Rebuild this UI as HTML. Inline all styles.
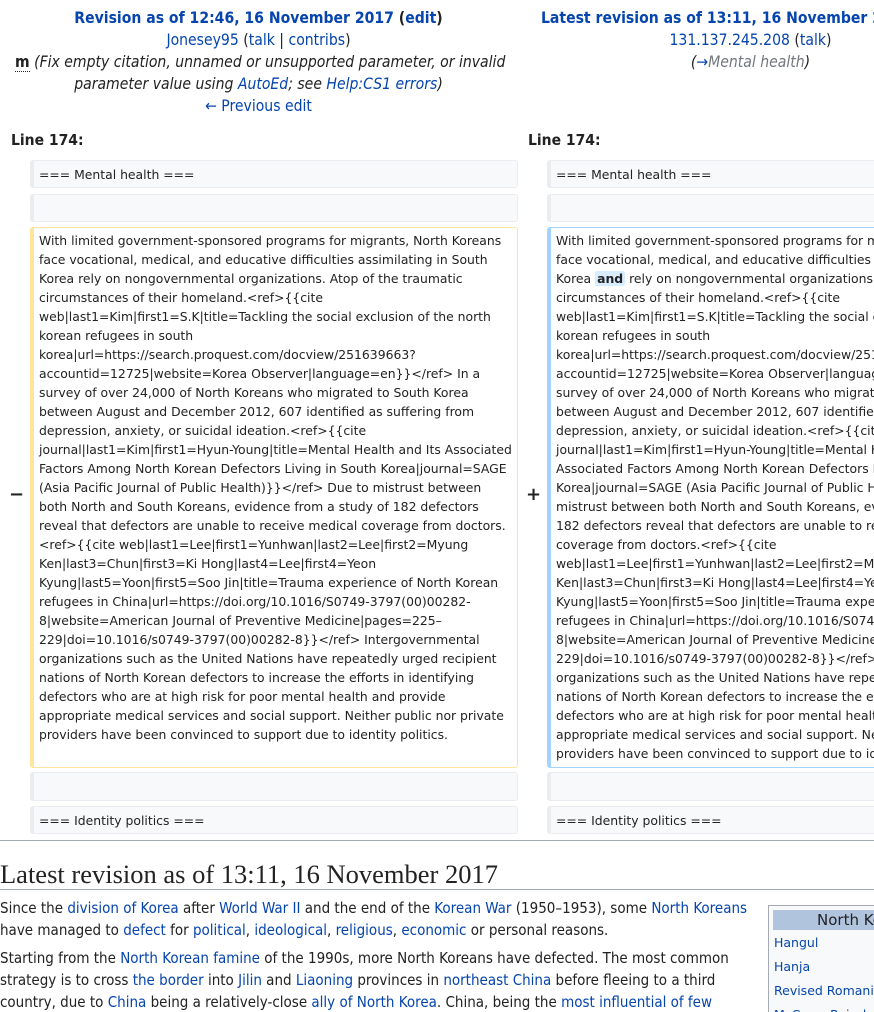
<!DOCTYPE html>
<html><head><meta charset="utf-8"><style>
*{margin:0;padding:0;box-sizing:border-box}
html,body{width:874px;height:1012px;overflow:hidden;background:#fff}
body{font-family:"DejaVu Sans Condensed","Liberation Sans Narrow","Liberation Sans",sans-serif;color:#222;font-size:14px}
#w{position:relative;width:874px;height:1012px;overflow:hidden}
a{color:#0645ad;text-decoration:none}
.abs{position:absolute;white-space:nowrap}
.hdr{position:absolute;text-align:center;width:487px;line-height:22px;font-size:15.6px;white-space:nowrap}
.box{position:absolute;background:#f8f9fa;border:1px solid #eaecf0;border-left-width:4px;border-radius:3px;font-family:"DejaVu Sans",sans-serif;font-size:12.4px;line-height:19px;padding:4px 0 0 5px;white-space:nowrap;overflow:hidden}
.main{background:#fff;padding-top:3px}
.del{border-color:#ffe49c}
.ins{border-color:#a3d3ff}
.mk{position:absolute;font-family:"DejaVu Sans",sans-serif;font-weight:bold;font-size:18px}
b.h{background:#d8ecff;border-radius:2px;padding:0 2px}
.p{position:absolute;left:0;line-height:22px;font-size:15px;white-space:nowrap}
</style></head><body><div id="w">
<div class="hdr" style="left:15px;top:7px">
<div><b><a>Revision as of 12:46, 16 November 2017</a> (<a>edit</a>)</b></div>
<div><a>Jonesey95</a> (<a>talk</a> | <a>contribs</a>)</div>
<div><b style="border-bottom:1px dotted #222">m</b> <i>(Fix empty citation, unnamed or unsupported parameter, or invalid</i></div>
<div><i>parameter value using <a>AutoEd</a>; see <a>Help:CS1 errors</a>)</i></div>
<div><a>← Previous edit</a></div>
</div>
<div class="hdr" style="left:507px;top:7px;width:487px">
<div><b><a>Latest revision as of 13:11, 16 November 2017</a> (<a>edit</a>)</b></div>
<div><a>131.137.245.208</a> (<a>talk</a>)</div>
<div><i>(<a>→</a><a style="color:#72777d">Mental health</a>)</i></div>
</div>
<div class="abs" style="left:11px;top:131px;font-weight:bold;font-size:15.5px">Line 174:</div>
<div class="abs" style="left:528px;top:131px;font-weight:bold;font-size:15.5px">Line 174:</div>

<div class="box" style="left:30px;top:160px;width:488px;height:28px">=== Mental health ===</div>
<div class="box" style="left:30px;top:194px;width:488px;height:28px"></div>
<div class="box main del" style="left:30px;top:227px;width:488px;height:541px">With limited government-sponsored programs for migrants, North Koreans<br>face vocational, medical, and educative difficulties assimilating in South<br>Korea rely on nongovernmental organizations. Atop of the traumatic<br>circumstances of their homeland.&lt;ref&gt;{{cite<br>web|last1=Kim|first1=S.K|title=Tackling the social exclusion of the north<br>korean refugees in south<br>korea|url=https://search.proquest.com/docview/251639663?<br>accountid=12725|website=Korea Observer|language=en}}&lt;/ref&gt; In a<br>survey of over 24,000 of North Koreans who migrated to South Korea<br>between August and December 2012, 607 identified as suffering from<br>depression, anxiety, or suicidal ideation.&lt;ref&gt;{{cite<br>journal|last1=Kim|first1=Hyun-Young|title=Mental Health and Its Associated<br>Factors Among North Korean Defectors Living in South Korea|journal=SAGE<br>(Asia Pacific Journal of Public Health)}}&lt;/ref&gt; Due to mistrust between<br>both North and South Koreans, evidence from a study of 182 defectors<br>reveal that defectors are unable to receive medical coverage from doctors.<br>&lt;ref&gt;{{cite web|last1=Lee|first1=Yunhwan|last2=Lee|first2=Myung<br>Ken|last3=Chun|first3=Ki Hong|last4=Lee|first4=Yeon<br>Kyung|last5=Yoon|first5=Soo Jin|title=Trauma experience of North Korean<br>refugees in China|url=https://doi.org/10.1016/S0749-3797(00)00282-<br>8|website=American Journal of Preventive Medicine|pages=225–<br>229|doi=10.1016/s0749-3797(00)00282-8}}&lt;/ref&gt; Intergovernmental<br>organizations such as the United Nations have repeatedly urged recipient<br>nations of North Korean defectors to increase the efforts in identifying<br>defectors who are at high risk for poor mental health and provide<br>appropriate medical services and social support. Neither public nor private<br>providers have been convinced to support due to identity politics.</div>
<div class="box" style="left:30px;top:772px;width:488px;height:29px"></div>
<div class="box" style="left:30px;top:806px;width:488px;height:28px">=== Identity politics ===</div>
<div class="mk" style="left:9px;top:484px">−</div>

<div class="box" style="left:547px;top:160px;width:488px;height:28px">=== Mental health ===</div>
<div class="box" style="left:547px;top:194px;width:488px;height:28px"></div>
<div class="box main ins" style="left:547px;top:227px;width:488px;height:541px">With limited government-sponsored programs for migrants, North Koreans<br>face vocational, medical, and educative difficulties assimilating in South<br>Korea <b class="h">and</b> rely on nongovernmental organizations. Atop of the traumatic<br>circumstances of their homeland.&lt;ref&gt;{{cite<br>web|last1=Kim|first1=S.K|title=Tackling the social exclusion of the north<br>korean refugees in south<br>korea|url=https://search.proquest.com/docview/251639663?<br>accountid=12725|website=Korea Observer|language=en}}&lt;/ref&gt; In a<br>survey of over 24,000 of North Koreans who migrated to South Korea<br>between August and December 2012, 607 identified as suffering from<br>depression, anxiety, or suicidal ideation.&lt;ref&gt;{{cite<br>journal|last1=Kim|first1=Hyun-Young|title=Mental Health and Its<br>Associated Factors Among North Korean Defectors Living in South<br>Korea|journal=SAGE (Asia Pacific Journal of Public Health)}}&lt;/ref&gt; Due to<br>mistrust between both North and South Koreans, evidence from a study of<br>182 defectors reveal that defectors are unable to receive medical<br>coverage from doctors.&lt;ref&gt;{{cite<br>web|last1=Lee|first1=Yunhwan|last2=Lee|first2=Myung<br>Ken|last3=Chun|first3=Ki Hong|last4=Lee|first4=Yeon<br>Kyung|last5=Yoon|first5=Soo Jin|title=Trauma experience of North Korean<br>refugees in China|url=https://doi.org/10.1016/S0749-3797(00)00282-<br>8|website=American Journal of Preventive Medicine|pages=225–<br>229|doi=10.1016/s0749-3797(00)00282-8}}&lt;/ref&gt; Intergovernmental<br>organizations such as the United Nations have repeatedly urged recipient<br>nations of North Korean defectors to increase the efforts in identifying<br>defectors who are at high risk for poor mental health and provide<br>appropriate medical services and social support. Neither public nor private<br>providers have been convinced to support due to identity politics.</div>
<div class="box" style="left:547px;top:772px;width:488px;height:29px"></div>
<div class="box" style="left:547px;top:806px;width:488px;height:28px">=== Identity politics ===</div>
<div class="mk" style="left:526px;top:484px">+</div>

<div style="position:absolute;left:0;top:840px;width:874px;height:1px;background:#a2a9b1"></div>
<div class="abs" style="left:0;top:858px;font-family:'Liberation Serif',serif;font-size:26.5px;line-height:32px">Latest revision as of 13:11, 16 November 2017</div>
<div style="position:absolute;left:0;top:889px;width:874px;height:1px;background:#a2a9b1"></div>

<div class="p" style="top:897px">Since the <a>division of Korea</a> after <a>World War II</a> and the end of the <a>Korean War</a> (1950–1953), some <a>North Koreans</a></div>
<div class="p" style="top:919px">have managed to <a>defect</a> for <a>political</a>, <a>ideological</a>, <a>religious</a>, <a>economic</a> or personal reasons.</div>
<div class="p" style="top:947px">Starting from the <a>North Korean famine</a> of the 1990s, more North Koreans have defected. The most common</div>
<div class="p" style="top:969px">strategy is to cross <a>the border</a> into <a>Jilin</a> and <a>Liaoning</a> provinces in <a>northeast China</a> before fleeing to a third</div>
<div class="p" style="top:991px">country, due to <a>China</a> being a relatively-close <a>ally of North Korea</a>. China, being the <a>most influential of few</a></div>

<div style="position:absolute;left:768px;top:905px;width:130px;height:120px;background:#f8f9fa;border:1px solid #a2a9b1;font-family:'DejaVu Sans',sans-serif;font-size:12.5px;overflow:hidden">
<div style="margin:4px 0 0 4px;background:#b0c4de;height:20px;line-height:20px;padding-left:44px;font-size:15px;white-space:nowrap;overflow:hidden">North Korea</div>
<div style="padding-left:5px;line-height:24px;white-space:nowrap;margin-top:1px"><a>Hangul</a><br><a>Hanja</a><br><a>Revised Romanization</a><br><a>McCune–Reischauer</a></div>
</div>
</div></body></html>
